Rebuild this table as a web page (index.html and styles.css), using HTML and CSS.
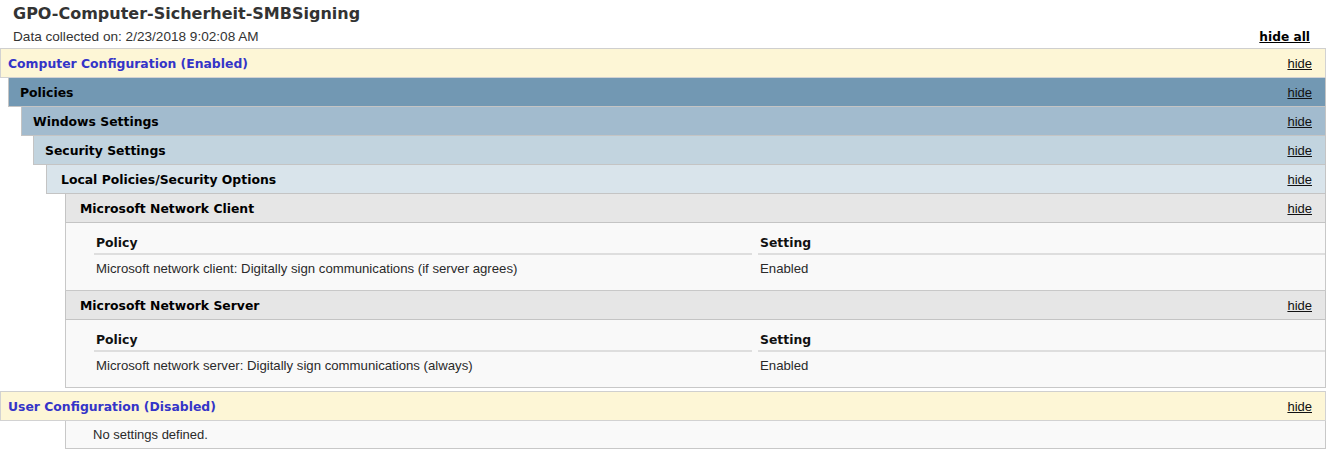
FILE: index.html
```html
<!DOCTYPE html>
<html lang="de">
<head>
<meta charset="utf-8">
<title>GPO-Computer-Sicherheit-SMBSigning</title>
<link rel="stylesheet" href="styles.css">
</head>
<body>
<div class="report">
  <div class="title">GPO-Computer-Sicherheit-SMBSigning</div>
  <div class="meta">
    <span>Data collected on: 2/23/2018 9:02:08 AM</span>
    <a class="hideall" href="#">hide all</a>
  </div>

  <section class="sec">
    <div class="bar bar-config first"><span class="cfg">Computer Configuration (Enabled)</span><a href="#">hide</a></div>
    <div class="nest n1">
      <div class="bar bar-l1"><span>Policies</span><a href="#">hide</a></div>
      <div class="nest n2">
        <div class="bar bar-l2"><span>Windows Settings</span><a href="#">hide</a></div>
        <div class="nest n3">
          <div class="bar bar-l3"><span>Security Settings</span><a href="#">hide</a></div>
          <div class="nest n4">
            <div class="bar bar-l4"><span>Local Policies/Security Options</span><a href="#">hide</a></div>
            <div class="nest n5">
              <div class="bar bar-l5"><span>Microsoft Network Client</span><a href="#">hide</a></div>
              <div class="box">
                <div class="grid">
                  <div class="th">Policy</div><div class="th">Setting</div>
                  <div class="td">Microsoft network client: Digitally sign communications (if server agrees)</div><div class="td">Enabled</div>
                </div>
              </div>
              <div class="bar bar-l5"><span>Microsoft Network Server</span><a href="#">hide</a></div>
              <div class="box">
                <div class="grid">
                  <div class="th">Policy</div><div class="th">Setting</div>
                  <div class="td">Microsoft network server: Digitally sign communications (always)</div><div class="td">Enabled</div>
                </div>
              </div>
            </div>
          </div>
        </div>
      </div>
    </div>
  </section>

  <section class="sec user">
    <div class="bar bar-config first"><span class="cfg">User Configuration (Disabled)</span><a href="#">hide</a></div>
    <div class="nest n-user">
      <div class="box empty">No settings defined.</div>
    </div>
  </section>
</div>
</body>
</html>
```

FILE: styles.css
```css
html, body {
  margin: 0;
  padding: 0;
  background: #ffffff;
}

body {
  font-family: "Liberation Sans", Arial, sans-serif;
  font-size: 13px;
  color: #222222;
}

.report {
  padding-right: 5px;
}

.title {
  padding: 4px 0 0 13px;
  height: 20px;
  line-height: 20px;
  font-family: "DejaVu Sans", sans-serif;
  font-weight: bold;
  font-size: 16px;
  color: #333333;
}

.meta {
  display: flex;
  justify-content: space-between;
  align-items: center;
  height: 24px;
  padding: 0 16px 0 13px;
  font-size: 13.6px;
  color: #333333;
}

.hideall {
  font-family: "DejaVu Sans", sans-serif;
  font-weight: bold;
  font-size: 12.2px;
  color: #000000;
  text-decoration: underline;
  padding-top: 2px;
}

.bar {
  display: flex;
  justify-content: space-between;
  align-items: center;
  height: 28px;
  border: 1px solid #c4c4c4;
  border-top: none;
  padding-right: 13px;
  font-family: "DejaVu Sans", sans-serif;
  font-weight: bold;
  font-size: 12.4px;
  color: #000000;
}

.bar > span {
  padding-top: 1px;
}

.bar.first {
  border-top: 1px solid #cfcfcf;
}

.bar a {
  font-family: "Liberation Sans", Arial, sans-serif;
  font-weight: normal;
  font-size: 13px;
  color: #111111;
  text-decoration: underline;
}

.bar-config {
  background: #fdf6d6;
  padding-left: 7px;
  border-color: #d2d2d2;
}

.cfg {
  color: #3434c8;
}

.bar-l1 { background: #7298b3; padding-left: 11px; }
.bar-l2 { background: #a2bbce; padding-left: 11px; }
.bar-l3 { background: #c2d4df; padding-left: 11px; }
.bar-l4 { background: #d9e4eb; padding-left: 14px; }
.bar-l5 { background: #e6e6e6; padding-left: 14px; }

.n1 { margin-left: 8px; }
.n2 { margin-left: 13px; }
.n3 { margin-left: 12px; }
.n4 { margin-left: 13px; }
.n5 { margin-left: 19px; }
.n-user { margin-left: 65px; }

.box {
  background: #f9f9f9;
  border: 1px solid #c8c8c8;
  border-top: none;
  padding: 7px 0 7px 28px;
}

.grid {
  display: grid;
  grid-template-columns: 658px 1fr;
  column-gap: 6px;
}

.th {
  height: 23px;
  line-height: 25px;
  padding-left: 2px;
  border-bottom: 2px solid #dedede;
  font-family: "DejaVu Sans", sans-serif;
  font-weight: bold;
  font-size: 12.4px;
  color: #111111;
}

.td {
  height: 28px;
  line-height: 28px;
  padding-left: 2px;
  font-size: 13.2px;
  color: #2a2a2a;
}

.user {
  margin-top: 3px;
}

.box.empty {
  height: 27px;
  line-height: 27px;
  padding: 0 0 0 27px;
  color: #2a2a2a;
}
```
